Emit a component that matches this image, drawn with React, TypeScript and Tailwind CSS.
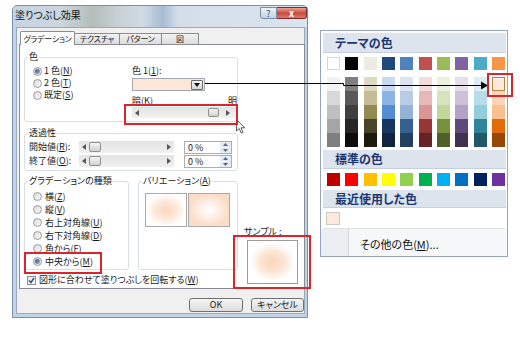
import React from "react";

const themeCols: string[][] = [
  ["#FFFFFF", "#F2F2F2", "#D8D8D8", "#BFBFBF", "#A5A5A5", "#7F7F7F"],
  ["#000000", "#7F7F7F", "#595959", "#3F3F3F", "#262626", "#0C0C0C"],
  ["#EEECE1", "#DDD9C3", "#C4BD97", "#938953", "#494429", "#1D1B10"],
  ["#1F497D", "#C6D9F0", "#8DB3E2", "#548DD4", "#17365D", "#0F243E"],
  ["#4F81BD", "#DBE5F1", "#B8CCE4", "#95B3D7", "#366092", "#244061"],
  ["#C0504D", "#F2DCDB", "#E5B9B7", "#D99694", "#953734", "#632423"],
  ["#9BBB59", "#EBF1DD", "#D7E3BC", "#C3D69B", "#76923C", "#4F6128"],
  ["#8064A2", "#E5E0EC", "#CCC1D9", "#B2A2C7", "#5F497A", "#3F3151"],
  ["#4BACC6", "#DBEEF3", "#B7DDE8", "#92CDDC", "#31859B", "#205867"],
  ["#F79646", "#FDEADA", "#FBD5B5", "#FAC08F", "#E36C09", "#974806"],
];
const standard = ["#C00000", "#FF0000", "#FFC000", "#FFFF00", "#92D050", "#00B050", "#00B0F0", "#0070C0", "#002060", "#7030A0"];

function Radio({ checked }: { checked?: boolean }) {
  return (
    <span className="inline-flex w-[9px] h-[9px] rounded-full border border-[#9a9a9a] bg-linear-to-br from-[#dcdcdc] to-[#f7f7f7] items-center justify-center shrink-0">
      {checked && <span className="w-[5px] h-[5px] rounded-full bg-linear-to-br from-[#2f4f80] to-[#9ab8dc]" />}
    </span>
  );
}

function ArrowL() {
  return (
    <svg width="4" height="6" viewBox="0 0 4 6"><polygon points="4,0 0,3 4,6" fill="#555" /></svg>
  );
}
function ArrowR() {
  return (
    <svg width="4" height="6" viewBox="0 0 4 6"><polygon points="0,0 4,3 0,6" fill="#555" /></svg>
  );
}

function Group({ label, className, children }: { label: React.ReactNode; className: string; children?: React.ReactNode }) {
  return (
    <div className={"border border-[#d5dfe5] rounded-[3px] " + className}>
      <div className="-mt-[7px] ml-[3px] px-[1px] bg-white w-fit h-[12px] leading-[12px] whitespace-nowrap">{label}</div>
      {children}
    </div>
  );
}

function Dialog() {
  return (
    <div className="ml-[12px] mt-[5px] w-[296px] h-[313px] shrink-0 flex flex-col rounded-t-[5px] border border-[#7890ad] bg-[#c2d3e6]">
      {/* title bar */}
      <div className="h-[21px] flex items-start justify-between rounded-t-[4px] bg-[linear-gradient(90deg,#c6d4e3_0%,#ccd6de_16%,#b3beba_27%,#c6cfd2_35%,#d1dbe6_44%,#a6bbd3_51%,#d3dee9_56%,#dbe5ef_100%)]">
        <span className="pl-[2px] pt-[3px] text-[10px] leading-[12px] text-[#111]">塗りつぶし効果</span>
        <div className="flex mt-[1px]">
          <div className="w-[17px] h-[12px] border border-[#7d8da3] rounded-bl-[3px] bg-linear-to-b from-[#eef3f8] to-[#c2d1e2] flex items-center justify-center text-[9px] leading-none text-[#34455e]">?</div>
          <div className="w-[30px] h-[12px] border border-l-0 border-[#7b2d27] rounded-br-[3px] bg-linear-to-b from-[#e8a498] via-[#c9473c] to-[#db7b6f] flex items-center justify-center text-white text-[9px] leading-none font-bold">x</div>
        </div>
      </div>
      {/* body */}
      <div className="h-[287px] ml-[3px] w-[289px] border border-[#9aaabd] bg-[#f0f0f0] flex flex-col pl-[1px] pt-[3px]">
        {/* tabs */}
        <div className="flex items-end h-[13px] ml-[2px] relative z-10 whitespace-nowrap text-[8px] tracking-[-0.2px]">
          <div className="w-[55px] h-[14px] -mb-px bg-white border border-b-0 border-[#898c95] rounded-t-[2px] flex items-center justify-center leading-[12px]">グラデーション</div>
          <div className="w-[45px] h-[11px] bg-linear-to-b from-[#f3f3f3] to-[#dcdcdc] border border-b-0 border-l-0 border-[#898c95] flex items-center justify-center leading-[10px]">テクスチャ</div>
          <div className="w-[42px] h-[11px] bg-linear-to-b from-[#f3f3f3] to-[#dcdcdc] border border-b-0 border-l-0 border-[#898c95] flex items-center justify-center leading-[10px]">パターン</div>
          <div className="w-[37px] h-[11px] bg-linear-to-b from-[#f3f3f3] to-[#dcdcdc] border border-b-0 border-l-0 border-[#898c95] flex items-center justify-center leading-[10px]">図</div>
        </div>
        {/* panel */}
        <div className="ml-[1px] w-[286px] h-[245px] border border-[#898c95] bg-white flex">
          <div className="ml-[4px] w-[214px] flex flex-col">
            {/* 色 */}
            <Group label="色" className="mt-[12px] h-[65px]">
              <div className="flex mt-[2px]">
                <div className="w-[107px] pl-[8px] flex flex-col">
                  <div className="h-[12px] flex items-center"><Radio checked /><span className="ml-[2px]">1 色(<u>N</u>)</span></div>
                  <div className="h-[12px] flex items-center"><Radio /><span className="ml-[2px]">2 色(<u>T</u>)</span></div>
                  <div className="h-[12px] flex items-center"><Radio /><span className="ml-[2px]">既定(<u>S</u>)</span></div>
                </div>
                <div className="w-[105px] flex flex-col">
                  <div className="h-[12px] leading-[12px]">色 1(<u>1</u>):</div>
                  <div className="mt-[1px] w-[73px] h-[13px] border border-[#a3a8b0] bg-[#fde7d7] flex justify-end items-center pr-[1px]">
                    <div className="w-[12px] h-[10px] border border-[#6f6f6f] rounded-[1px] bg-linear-to-b from-[#f6f6f6] to-[#d8d8d8] flex items-center justify-center">
                      <svg width="6" height="4" viewBox="0 0 6 4"><polygon points="0,0 6,0 3,4" fill="#111" /></svg>
                    </div>
                  </div>
                  <div className="mt-[4px] h-[12px] flex justify-between leading-[12px]"><span>暗(<u>K</u>)</span><span>明</span></div>
                  <div className="h-[11px] w-[105px] bg-linear-to-b from-[#e3e3e3] to-[#f1f1f1] flex items-center">
                    <div className="w-[10px] flex justify-center"><ArrowL /></div>
                    <div className="w-[66px]" />
                    <div className="w-[11px] h-[9px] rounded-[2px] border border-[#8e8f8f] bg-linear-to-b from-[#f5f5f5] to-[#d2d2d2]" />
                    <div className="flex-1 flex justify-center"><ArrowR /></div>
                  </div>
                </div>
              </div>
            </Group>
            {/* 透過性 */}
            <Group label="透過性" className="mt-[11px] h-[38px]">
              {[["開始値(", "R", "):"], ["終了値(", "O", "):"]].map((r, i) => (
                <div key={i} className="flex items-center h-[12px] mt-[2px]">
                  <span className="w-[54px] pl-[4px] leading-[12px]">{r[0]}<u>{r[1]}</u>{r[2]}</span>
                  <div className="w-[95px] h-[12px] bg-linear-to-b from-[#e3e3e3] to-[#f1f1f1] flex items-center">
                    <div className="w-[10px] flex justify-center"><ArrowL /></div>
                    <div className="w-[12px] h-[10px] rounded-[2px] border border-[#8e8f8f] bg-linear-to-b from-[#f5f5f5] to-[#d2d2d2]" />
                    <div className="flex-1" />
                    <div className="w-[10px] flex justify-center"><ArrowR /></div>
                  </div>
                  <div className="ml-[10px] w-[48px] h-[13px] border border-[#abadb3] bg-white flex">
                    <span className="flex-1 pl-[3px] leading-[11px]">0 %</span>
                    <div className="w-[11px] flex flex-col">
                      <div className="flex-1 bg-[#e4ebf4] flex items-center justify-center border-b border-white"><svg width="5" height="3" viewBox="0 0 5 3"><polygon points="0,3 5,3 2.5,0" fill="#4f6a8c" /></svg></div>
                      <div className="flex-1 bg-[#e4ebf4] flex items-center justify-center"><svg width="5" height="3" viewBox="0 0 5 3"><polygon points="0,0 5,0 2.5,3" fill="#4f6a8c" /></svg></div>
                    </div>
                  </div>
                </div>
              ))}
            </Group>
            {/* bottom groups */}
            <div className="flex mt-[10px] gap-[9px]">
              <Group label="グラデーションの種類" className="w-[105px] h-[89px]">
                <div className="mt-[3px] pl-[8px] flex flex-col">
                  {[["横(", "Z", ")"], ["縦(", "V", ")"], ["右上対角線(", "U", ")"], ["右下対角線(", "D", ")"], ["角から(", "F", ")"], ["中央から(", "M", ")"]].map((r, i) => (
                    <div key={i} className="h-[13px] flex items-center">
                      <Radio checked={i === 5} />
                      <span className="ml-[3px] leading-[12px]">{r[0]}<u>{r[1]}</u>{r[2]}</span>
                    </div>
                  ))}
                </div>
              </Group>
              <Group label={<span>バリエーション(<u>A</u>)</span>} className="w-[100px] h-[89px]">
                <div className="mt-[6px] pl-[6px] flex gap-px">
                  <div className="w-[42px] h-[34px] border border-[#a9a9a9] bg-[radial-gradient(closest-side,#fcd8bf_0%,#fde8da_55%,#ffffff_100%)]" />
                  <div className="w-[42px] h-[34px] border border-[#a9a9a9] bg-[radial-gradient(closest-side,#ffffff_0%,#fef1e8_45%,#fbdcc6_100%)]" />
                </div>
              </Group>
            </div>
            {/* checkbox */}
            <div className="mt-[4px] h-[12px] flex items-center ml-[3px] whitespace-nowrap">
              <span className="w-[9px] h-[9px] border border-[#8e8f8f] bg-linear-to-br from-[#e6e6e6] to-[#fbfbfb] flex items-center justify-center shrink-0">
                <svg width="7" height="7" viewBox="0 0 7 7"><polyline points="1,3.5 3,5.5 6,1" fill="none" stroke="#34508a" strokeWidth="1.5" /></svg>
              </span>
              <span className="ml-[3px] leading-[12px]">図形に合わせて塗りつぶしを回転する(<u>W</u>)</span>
            </div>
          </div>
          {/* sample */}
          <div className="flex-1 flex flex-col justify-end pb-[4px]">
            <div className="ml-[6px] h-[12px] leading-[12px]">サンプル :</div>
            <div className="mt-[2px] ml-[9px] w-[51px] h-[44px] border border-[#9d9d9d] bg-white p-[2px]">
              <div className="w-full h-full bg-[radial-gradient(closest-side,#fbd5b9_0%,#fde6d6_55%,#ffffff_100%)]" />
            </div>
          </div>
        </div>
        {/* buttons */}
        <div className="mt-[9px] flex justify-end gap-[8px]">
          <div className="w-[54px] h-[14px] rounded-[3px] border border-[#707070] bg-linear-to-b from-[#f4f4f4] to-[#dcdcdc] flex items-center justify-center leading-[12px]">OK</div>
          <div className="w-[53px] h-[14px] rounded-[3px] border border-[#707070] bg-linear-to-b from-[#f4f4f4] to-[#dcdcdc] flex items-center justify-center leading-[12px]">キャンセル</div>
        </div>
      </div>
    </div>
  );
}

function Header({ children, className }: { children: React.ReactNode; className: string }) {
  return (
    <div className={"bg-[#dde4ed] border-b border-[#c6d0dc] flex items-center pl-[12px] text-[12px] font-bold text-[#1d3670] leading-[14px] " + className}>
      {children}
    </div>
  );
}

function Popup() {
  return (
    <div className="mt-[30px] ml-[12px] w-[188px] h-[227px] shrink-0 border border-[#95a6ba] bg-white flex flex-col">
      <div className="px-[2px] pt-[2px] flex flex-col">
        <Header className="h-[20px] mr-[-1px]">テーマの色</Header>
        <div className="mt-[4px] ml-[4px] w-[178px] flex justify-between">
          {themeCols.map((c, i) => (
            <div key={i} className={"w-[13px] h-[13px] " + (i === 0 ? "border border-[#d6d6d6]" : "")} style={{ backgroundColor: c[0] }} />
          ))}
        </div>
        <div className="mt-[7px] ml-[4px] w-[178px] flex justify-between">
          {themeCols.map((c, i) => (
            <div key={i} className="w-[13px] flex flex-col">
              {c.slice(1).map((s, j) =>
                i === 9 && j === 0 ? (
                  <div key={j} className="h-[14px] border border-[#c07b3a] p-px bg-[#fff6ee]">
                    <div className="w-full h-full" style={{ backgroundColor: s }} />
                  </div>
                ) : (
                  <div key={j} className="h-[14px]" style={{ backgroundColor: s }} />
                )
              )}
            </div>
          ))}
        </div>
        <Header className="mt-[3px] h-[19px] mr-[-1px]">標準の色</Header>
        <div className="mt-[4px] ml-[4px] w-[178px] flex justify-between">
          {standard.map((c, i) => (
            <div key={i} className="w-[13px] h-[13px]" style={{ backgroundColor: c }} />
          ))}
        </div>
        <Header className="mt-[4px] h-[18px] mr-[-1px]">最近使用した色</Header>
        <div className="h-[21px] border-b border-[#dcdfe3] flex items-center pl-[3px]">
          <div className="w-[14px] h-[13px] border border-[#c9c9c9] bg-[#fde9d9]" />
        </div>
      </div>
      <div className="flex-1 flex bg-[#f6f7f8]">
        <div className="w-[28px] bg-[#eceef1] border-r border-[#d4d8dd]" />
        <div className="ml-[11px] flex items-center pt-[4px] text-[11px] leading-[13px] text-[#111]">その他の色(<u>M</u>)...</div>
      </div>
    </div>
  );
}

function Overlays() {
  return (
    <>
      <svg className="absolute left-0 top-0 pointer-events-none" width="520" height="342" viewBox="0 0 520 342">
        <polyline points="205,83.5 343.5,83.5 343.5,85.5 482,85.5" fill="none" stroke="#000" strokeWidth="1" />
        <polygon points="481,81.5 488,85.5 481,89.5" fill="#000" />
        <path d="M236.5 119.5 L236.5 131 L239.2 128.5 L241.3 133.2 L243 132.4 L241 127.8 L244.7 127.8 Z" fill="#fff" stroke="#333" strokeWidth="0.8" />
      </svg>
      <div className="absolute left-[124px] top-[104px] w-[114px] h-[21px] border-2 border-[#d9252b] pointer-events-none" />
      <div className="absolute left-[24px] top-[252px] w-[78px] h-[22px] border-2 border-[#d9252b] pointer-events-none" />
      <div className="absolute left-[233px] top-[235px] w-[78px] h-[54px] border-2 border-[#d9252b] pointer-events-none" />
      <div className="absolute left-[487px] top-[73px] w-[26px] h-[24px] border-2 border-[#d9252b] pointer-events-none" />
    </>
  );
}

export default function App() {
  return (
    <div className="relative w-[520px] h-[342px] overflow-hidden bg-white flex items-start font-['Noto_Sans_CJK_JP','Noto_Sans',sans-serif] text-[9px] leading-[12px] text-[#1a1a1a] [font-feature-settings:'palt']">
      <Dialog />
      <Popup />
      <Overlays />
    </div>
  );
}
